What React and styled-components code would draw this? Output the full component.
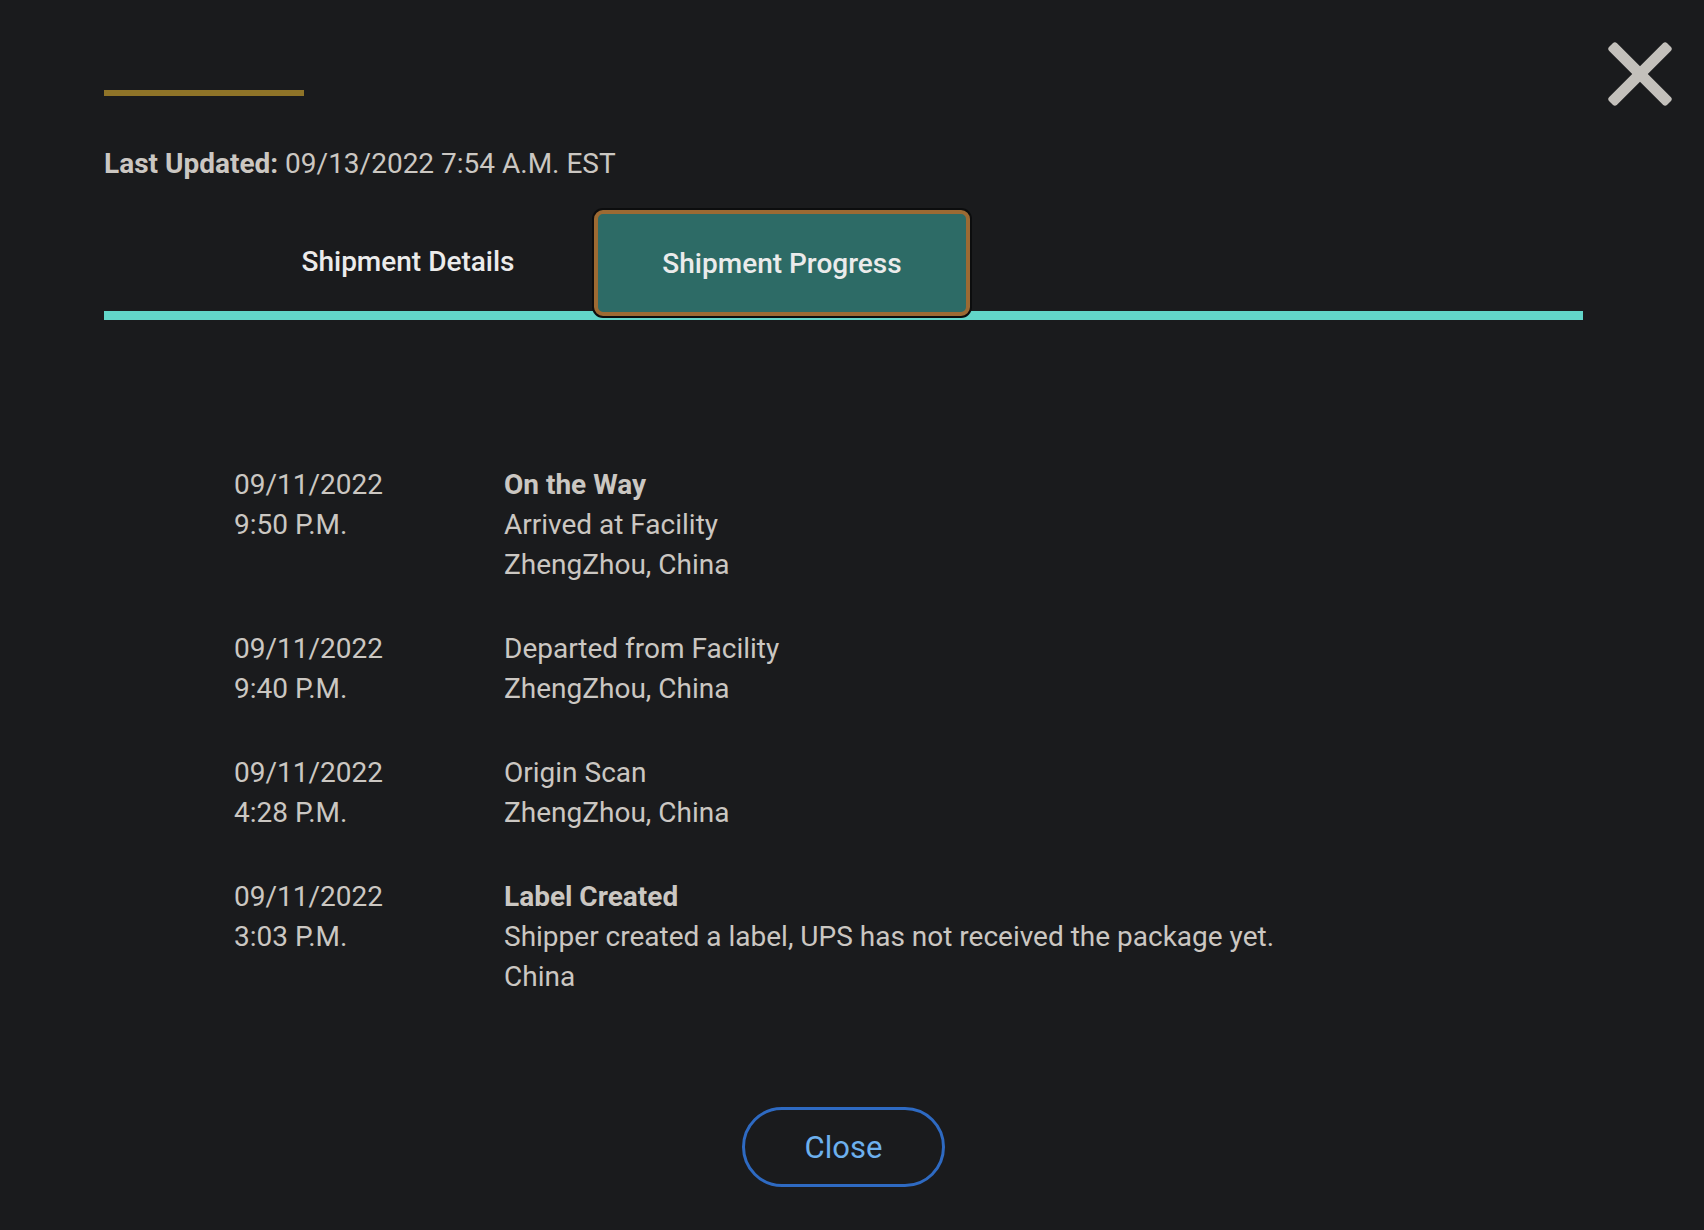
import styled, { createGlobalStyle } from 'styled-components'

const GlobalStyle = createGlobalStyle`
    html, body {
        margin: 0;
        padding: 0;
        background-color: #1a1b1d;
    }
    body {
        font-family: Roboto, "Liberation Sans", sans-serif;
        color: #cbc7c2;
    }
`

const Modal = styled.div`
    position: relative;
    min-height: 1230px;
    box-sizing: border-box;
    padding: 90px 121px 40px 104px;
    display: flex;
    flex-direction: column;
`

const DismissButton = styled.button`
    position: absolute;
    top: 39px;
    right: 29px;
    width: 70px;
    height: 70px;
    padding: 0;
    border: none;
    background: none;
    cursor: pointer;
`

const GoldBar = styled.div`
    width: 200px;
    height: 6px;
    background-color: #8f7428;
`

const Updated = styled.p`
    margin: 48px 0 0 0;
    font-size: 28px;
    line-height: 40px;
    color: #cbc7c2;
    b {
        font-weight: 700;
    }
`

const TabBar = styled.div`
    display: flex;
    margin-top: 26px;
    padding-left: 118px;
    border-bottom: 9px solid #62d6c9;
`

const Tab = styled.button`
    width: ${p => (p.$active ? '376px' : '372px')};
    height: 106px;
    margin-bottom: -5px;
    box-sizing: border-box;
    font-family: Roboto, "Liberation Sans", sans-serif;
    font-size: 28px;
    font-weight: 500;
    color: #ebebeb;
    cursor: pointer;
    border-radius: 9px;
    padding: ${p => (p.$active ? '0' : '0 0 4px 0')};
    background-color: ${p => (p.$active ? '#2d6b66' : 'transparent')};
    border: ${p => (p.$active ? '4px solid #9c6a33' : 'none')};
    box-shadow: ${p => (p.$active ? '0 0 0 2px #0c0d0e' : 'none')};
`

const Timeline = styled.div`
    display: flex;
    flex-direction: column;
    gap: 44px;
    margin-top: 145px;
    padding-left: 130px;
`

const Event = styled.div`
    display: grid;
    grid-template-columns: 270px 1fr;
    font-size: 28px;
    line-height: 40px;
`

const Stamp = styled.div`
    display: flex;
    flex-direction: column;
`

const Detail = styled.div`
    display: flex;
    flex-direction: column;
`

const Status = styled.span`
    font-weight: 700;
`

const Footer = styled.div`
    display: flex;
    justify-content: center;
    margin-top: 110px;
`

const CloseButton = styled.button`
    width: 203px;
    height: 80px;
    border-radius: 40px;
    border: 3px solid #2e6ac2;
    background: transparent;
    color: #6db0ee;
    font-family: Roboto, "Liberation Sans", sans-serif;
    font-size: 31px;
    cursor: pointer;
`

const events = [
    { date: '09/11/2022', time: '9:50 P.M.', status: 'On the Way', lines: ['Arrived at Facility', 'ZhengZhou, China'] },
    { date: '09/11/2022', time: '9:40 P.M.', lines: ['Departed from Facility', 'ZhengZhou, China'] },
    { date: '09/11/2022', time: '4:28 P.M.', lines: ['Origin Scan', 'ZhengZhou, China'] },
    { date: '09/11/2022', time: '3:03 P.M.', status: 'Label Created', lines: ['Shipper created a label, UPS has not received the package yet.', 'China'] },
]

const XIcon = () => (
    <svg width="70" height="70" viewBox="0 0 70 70">
        <rect x="-6" y="29.5" width="82" height="11" rx="3" fill="#c3c0bb" transform="rotate(45 35 35)" />
        <rect x="-6" y="29.5" width="82" height="11" rx="3" fill="#c3c0bb" transform="rotate(-45 35 35)" />
    </svg>
)

export default function App() {
    return (
        <>
            <GlobalStyle />
            <Modal>
                <DismissButton aria-label="Dismiss">
                    <XIcon />
                </DismissButton>
                <GoldBar />
                <Updated>
                    <b>Last Updated:</b> 09/13/2022 7:54 A.M. EST
                </Updated>
                <TabBar>
                    <Tab>Shipment Details</Tab>
                    <Tab $active>Shipment Progress</Tab>
                </TabBar>
                <Timeline>
                    {events.map((e, i) => (
                        <Event key={i}>
                            <Stamp>
                                <span>{e.date}</span>
                                <span>{e.time}</span>
                            </Stamp>
                            <Detail>
                                {e.status && <Status>{e.status}</Status>}
                                {e.lines.map(l => (
                                    <span key={l}>{l}</span>
                                ))}
                            </Detail>
                        </Event>
                    ))}
                </Timeline>
                <Footer>
                    <CloseButton>Close</CloseButton>
                </Footer>
            </Modal>
        </>
    )
}
